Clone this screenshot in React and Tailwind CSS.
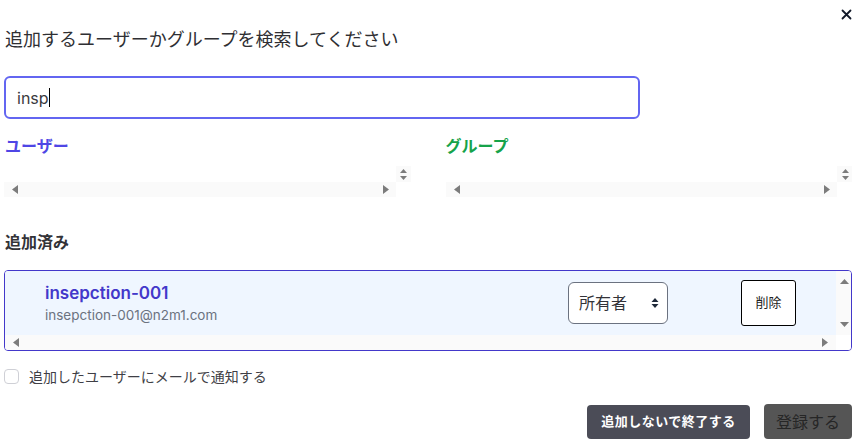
const font = { fontFamily: 'Inter, "Noto Sans CJK JP", sans-serif' }

function CloseIcon() {
  return (
    <svg width="11" height="11" viewBox="0 0 11 11" className="text-gray-900">
      <path d="M1.5 1.5 L9.5 9.5 M9.5 1.5 L1.5 9.5" stroke="currentColor" strokeWidth="1.8" strokeLinecap="round" />
    </svg>
  )
}

function UpDown() {
  return (
    <svg width="8" height="12" viewBox="0 0 8 12" className="text-gray-800">
      <path d="M4 1 L7.5 5 L0.5 5 Z M4 11 L0.5 7 L7.5 7 Z" fill="currentColor" />
    </svg>
  )
}

// scrollbar arrows, drawn like chrome's classic scrollbar
function Arrow({ dir, w = 6, h = 9 }) {
  const paths = {
    left: `M0 ${h / 2} L${w} 0 L${w} ${h} Z`,
    right: `M${w} ${h / 2} L0 0 L0 ${h} Z`,
    up: `M${w / 2} 0 L${w} ${h} L0 ${h} Z`,
    down: `M${w / 2} ${h} L0 0 L${w} 0 Z`,
  }
  return (
    <svg width={w} height={h} viewBox={`0 0 ${w} ${h}`} className="text-[#7c7c7c]">
      <path d={paths[dir]} fill="currentColor" />
    </svg>
  )
}

function EmptyList() {
  return (
    <div className="h-[31px] flex flex-col">
      <div className="h-[16px] flex">
        <div className="flex-1" />
        <div className="w-[15px] bg-[#fafafa] flex flex-col items-center justify-center gap-[3px] pl-[1px]">
          <Arrow dir="up" w={7} h={4} />
          <Arrow dir="down" w={7} h={4} />
        </div>
      </div>
      <div className="h-[15px] flex">
        <div className="flex-1 bg-[#fafafa] flex items-center justify-between pl-[8px] pr-[7px]">
          <Arrow dir="left" />
          <Arrow dir="right" />
        </div>
        <div className="w-[15px] bg-white" />
      </div>
    </div>
  )
}

export default function App() {
  return (
    <div className="w-[858px] h-[447px] bg-white px-[4px] text-[#2f2f33]" style={font}>
      {/* header */}
      <div className="h-[26px] flex justify-end items-start pt-[9px] pr-[2px]">
        <CloseIcon />
      </div>
      <h2 className="h-[28px] leading-[28px] text-[18px] pl-[1px] text-[#2f2f33]">
        追加するユーザーかグループを検索してください
      </h2>

      {/* search */}
      <div className="mt-[22px] w-[636px] h-[43px] rounded-md border-2 border-[#6366f1] px-[11px] flex items-center text-[16px] text-[#3a3a40]">
        <span>insp</span>
        <span className="w-[1px] h-[19px] bg-black" />
      </div>

      {/* results */}
      <div className="mt-[15px] grid grid-cols-2 gap-[35px] w-[848px]">
        <div>
          <div className="h-[24px] leading-[24px] text-[16px] font-bold text-[#4f46e5] pl-[1px]">ユーザー</div>
          <div className="mt-[8px]">
            <EmptyList />
          </div>
        </div>
        <div>
          <div className="h-[24px] leading-[24px] text-[16px] font-bold text-[#16a34a]">グループ</div>
          <div className="mt-[8px]">
            <EmptyList />
          </div>
        </div>
      </div>

      {/* added */}
      <div className="mt-[33px] h-[24px] leading-[24px] text-[16px] font-bold text-[#333338] pl-[1px]">追加済み</div>
      <div className="mt-[16px] w-[848px] h-[81px] rounded-[4px] border border-[#4338ca] overflow-hidden flex flex-col">
        <div className="h-[64px] flex">
          <div className="flex-1 bg-[#eff6ff] flex items-center pl-[40px] pr-[40px]">
            <div className="flex-1 flex flex-col">
              <span className="text-[17px] font-semibold leading-[22px] text-[#4338ca]">insepction-001</span>
              <span className="mt-[2px] text-[13.5px] leading-[18px] text-[#6b7280]">insepction-001@n2m1.com</span>
            </div>
            <div className="w-[100px] h-[42px] rounded-md border border-[#6b7280] bg-white flex items-center justify-between pl-[10px] pr-[8px]">
              <span className="text-[16px] text-[#333338]">所有者</span>
              <UpDown />
            </div>
            <button className="ml-[73px] w-[55px] h-[46px] rounded-[3px] border border-black bg-white text-[13px] text-[#222]">
              削除
            </button>
          </div>
          <div className="w-[15px] bg-[#fafafa] flex flex-col items-center justify-between pt-[8px] pb-[8px] pl-[1px]">
            <Arrow dir="up" w={9} h={5} />
            <Arrow dir="down" w={9} h={5} />
          </div>
        </div>
        <div className="h-[15px] flex">
          <div className="flex-1 bg-[#fafafa] flex items-center justify-between pl-[8px] pr-[8px]">
            <Arrow dir="left" />
            <Arrow dir="right" />
          </div>
          <div className="w-[15px] bg-white" />
        </div>
      </div>

      {/* notify */}
      <label className="mt-[15px] flex items-center h-[20px]">
        <span className="w-[15px] h-[15px] rounded-[4px] border border-[#cfd0d6] bg-white" />
        <span className="ml-[10px] text-[14px] text-[#3f3f46]">追加したユーザーにメールで通知する</span>
      </label>

      {/* actions */}
      <div className="mt-[18px] w-[848px] flex justify-end items-start gap-[14px]">
        <button className="w-[163px] h-[34px] mt-[1px] rounded-[4px] bg-[#4b4c57] text-white text-[13px] font-bold tracking-[0.5px]">
          追加しないで終了する
        </button>
        <button className="w-[88px] h-[35px] rounded-[4px] bg-[#555555] text-[#262626] text-[16px]">
          登録する
        </button>
      </div>
    </div>
  )
}
